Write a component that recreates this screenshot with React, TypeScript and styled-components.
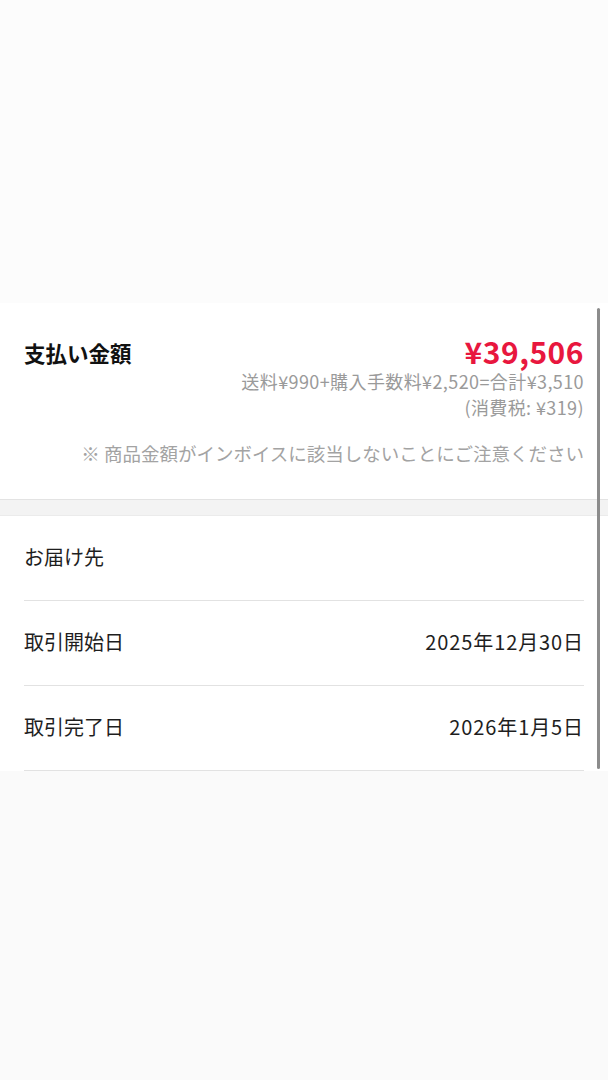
import styled, { createGlobalStyle } from "styled-components";

const GlobalStyle = createGlobalStyle`
  html, body {
    margin: 0;
    padding: 0;
    background: #fafafa;
  }
  body {
    font-family: "Noto Sans CJK JP", "Noto Sans", sans-serif;
    color: #222;
  }
`;

const Page = styled.div`
  display: flex;
  flex-direction: column;
  min-height: 1080px;
  background: #fafafa;
`;

const TopArea = styled.div`
  height: 303px;
  background: #fcfcfc;
`;

const Panel = styled.div`
  position: relative;
  background: #fff;
`;

const PaymentSection = styled.section`
  display: flex;
  flex-direction: column;
  padding: 31px 24px 33px;
`;

const PaymentHeader = styled.div`
  display: flex;
  justify-content: space-between;
  align-items: flex-start;
`;

const PaymentLabel = styled.h2`
  margin: 4px 0 0;
  font-size: 21.5px;
  font-weight: 700;
  line-height: 30px;
  color: #111;
`;

const AmountColumn = styled.div`
  display: flex;
  flex-direction: column;
  align-items: flex-end;
`;

const Amount = styled.div`
  font-size: 30px;
  font-weight: 700;
  line-height: 34px;
  color: #e8173e;
  letter-spacing: 0.5px;
`;

const SubText = styled.div`
  font-size: 18px;
  line-height: 26px;
  letter-spacing: 0.4px;
  color: #9a9a9a;
`;

const Notice = styled.p`
  margin: 20px 0 0;
  text-align: right;
  font-size: 18.5px;
  line-height: 26px;
  color: #a3a3a3;
`;

const Band = styled.div`
  height: 15px;
  background: #f3f3f3;
  border-top: 1px solid #e3e3e3;
  border-bottom: 1px solid #ebebeb;
`;

const InfoList = styled.div`
  display: flex;
  flex-direction: column;
  padding: 0 24px;
`;

const InfoRow = styled.div`
  display: flex;
  align-items: center;
  justify-content: space-between;
  height: 85px;
  padding-bottom: 3px;
  box-sizing: border-box;
  border-bottom: 1px solid #e2e2e2;
`;

const InfoText = styled.span<{ $value?: boolean }>`
  font-size: 20px;
  letter-spacing: ${({ $value }) => ($value ? "0.9px" : "0")};
  color: #1e1e1e;
`;

const Scrollbar = styled.div`
  position: absolute;
  top: 5px;
  bottom: 2px;
  right: 8px;
  width: 3px;
  border-radius: 2px;
  background: #8c8c8c;
`;

const rows = [
  { id: 1, label: "お届け先", value: "" },
  { id: 2, label: "取引開始日", value: "2025年12月30日" },
  { id: 3, label: "取引完了日", value: "2026年1月5日" },
];

export default function App() {
  return (
    <>
      <GlobalStyle />
      <Page>
        <TopArea />
        <Panel>
          <PaymentSection>
            <PaymentHeader>
              <PaymentLabel>支払い金額</PaymentLabel>
              <AmountColumn>
                <Amount>¥39,506</Amount>
                <SubText>送料¥990+購入手数料¥2,520=合計¥3,510</SubText>
                <SubText>(消費税: ¥319)</SubText>
              </AmountColumn>
            </PaymentHeader>
            <Notice>※ 商品金額がインボイスに該当しないことにご注意ください</Notice>
          </PaymentSection>
          <Band />
          <InfoList>
            {rows.map((row) => (
              <InfoRow key={row.id}>
                <InfoText>{row.label}</InfoText>
                <InfoText $value>{row.value}</InfoText>
              </InfoRow>
            ))}
          </InfoList>
          <Scrollbar />
        </Panel>
      </Page>
    </>
  );
}
